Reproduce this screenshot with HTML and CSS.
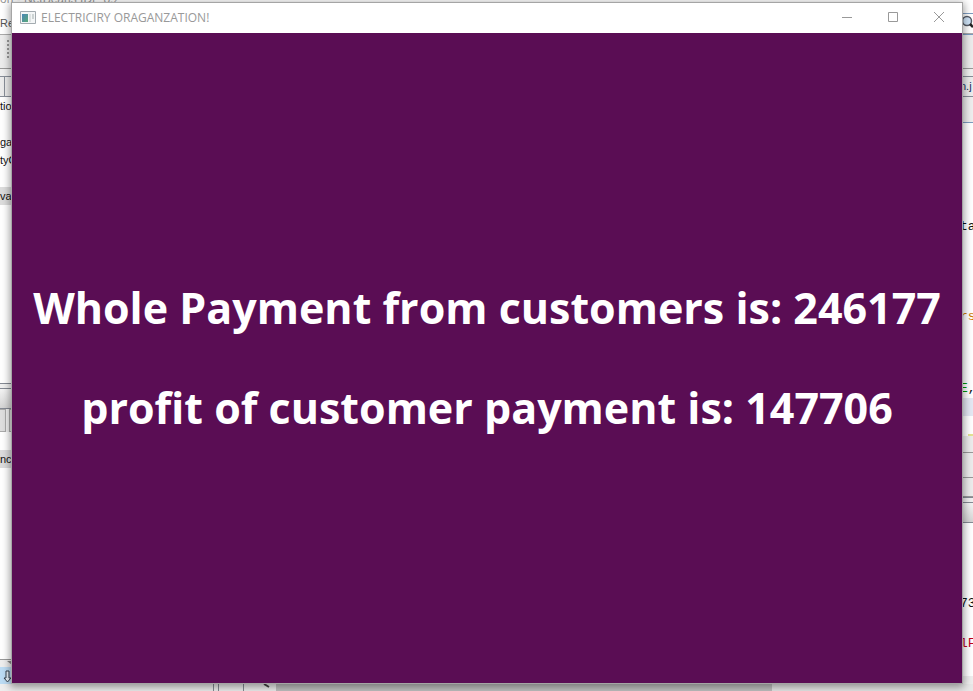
FILE: index.html
```html
<!DOCTYPE html>
<html lang="en">
<head>
<meta charset="utf-8">
<title>ELECTRICIRY ORAGANZATION!</title>
<link rel="stylesheet" href="styles.css">
</head>
<body>
<div class="desktop">
  <div class="ide">
    <div class="rail rail-left">
      <div class="caption">on - NetBeans IDE 8.2</div>
      <div class="menu">Ref</div>
      <div class="toolbar"><span class="grip"></span></div>
      <div class="gap"></div>
      <div class="tabs"><span class="tab-edge"></span></div>
      <div class="tree">
        <div class="node">tion</div>
        <div class="node"></div>
        <div class="node">ga</div>
        <div class="node">tyC</div>
        <div class="node"></div>
        <div class="node selected">va</div>
      </div>
      <div class="divider"></div>
      <div class="panel-head"></div>
      <div class="boxes"><span class="box"></span><span class="box"></span></div>
      <div class="nav">
        <div class="node selected">nci</div>
      </div>
      <div class="scroll-end">
        <svg width="12" height="7" viewBox="0 0 12 7"><path d="M7 1h5v4z" fill="#8a8a8a"/></svg>
      </div>
      <div class="tool">
        <svg width="12" height="18" viewBox="0 0 12 18"><path d="M6 4h3v7h2l-3.500 4L4 11h2z" fill="#e8f2fa" stroke="#34404c"/></svg>
      </div>
    </div>
    <div class="rail rail-right">
      <div class="search-space"></div>
      <div class="search">
        <svg width="13" height="18" viewBox="0 0 13 18"><circle cx="7" cy="7" r="4.500" fill="#cfe4f8" stroke="#555b66" stroke-width="1.500"/><path d="M10 10l3 3" stroke="#222" stroke-width="2.500"/></svg>
      </div>
      <div class="toolbar"></div>
      <div class="gap"></div>
      <div class="tabs">n.j</div>
      <div class="editor-bar"></div>
      <div class="editor">
        <div class="code line-a">ta</div>
        <div class="code line-b">rs</div>
        <div class="code line-c">E<span class="comma">,</span></div>
        <div class="current-line"></div>
        <div class="mark"></div>
      </div>
      <div class="bar bar-a"></div>
      <div class="bar bar-b"></div>
      <div class="bar bar-c"></div>
      <div class="divider"></div>
      <div class="panel-head"></div>
      <div class="output">
        <div class="code line-d">73</div>
        <div class="code line-e">lF</div>
      </div>
      <div class="foot"></div>
    </div>
  </div>
  <div class="status">
    <span class="status-left"></span>
    <span class="status-split"></span>
    <span class="status-cell"></span>
    <span class="status-arrow"><svg width="32" height="7" viewBox="0 0 32 7"><path d="M20 0l5 3" stroke="#444" stroke-width="2"/></svg></span>
    <span class="status-thumb"></span>
    <span class="status-track"></span>
  </div>

  <main class="window">
    <header class="titlebar">
      <svg class="app-icon" width="16" height="14" viewBox="0 0 16 14">
        <defs><linearGradient id="screen" x2="1" y2="1"><stop offset="0" stop-color="#4a86b8"/><stop offset="1" stop-color="#5aa878"/></linearGradient></defs>
        <path d="M.5.5h15v12H.5z" fill="#f4f6f7" stroke="#a3abb0"/>
        <path d="M2 3h6v8H2z" fill="url(#screen)"/>
        <path d="M9 3h2v8H9z" fill="#dde2e2"/>
        <path d="M12 3h2v5h-2z" fill="#ccd3d3"/>
      </svg>
      <h1 class="title">ELECTRICIRY ORAGANZATION!</h1>
      <button class="control" type="button" aria-label="Minimize"><svg width="12" height="12" viewBox="0 0 12 12"><path d="M1 5.500h10"/></svg></button>
      <button class="control" type="button" aria-label="Maximize"><svg width="12" height="12" viewBox="0 0 12 12"><path d="M1.500 .5h9v9h-9z"/></svg></button>
      <button class="control" type="button" aria-label="Close"><svg width="12" height="12" viewBox="0 0 12 12"><path d="M1 0l10 10M11 0L1 10"/></svg></button>
    </header>
    <section class="content">
      <p class="message">Whole Payment from customers is: 246177</p>
      <p class="message">profit of customer payment is: 147706</p>
    </section>
  </main>
</div>
</body>
</html>
```
FILE: styles.css
```css
* { box-sizing: border-box; }

body {
  margin: 0;
  font-family: "Open Sans", "Noto Sans", sans-serif;
}

svg { display: block; flex: none; }

.desktop {
  position: relative;
  display: flex;
  flex-direction: column;
  height: 100vh;
  overflow: hidden;
  background: #fff;
}

/* IDE behind the window */
.ide {
  flex: 1;
  display: flex;
  justify-content: space-between;
  min-height: 0;
}

.rail {
  display: flex;
  flex-direction: column;
  width: 13px;
  font-family: "Liberation Sans", sans-serif;
  font-size: 11px;
  line-height: 18px;
  white-space: nowrap;
  color: #111;
}

.rail > * { flex: none; overflow: hidden; }

.rail > .caption {
  display: flex;
  align-items: flex-end;
  height: 8px;
  overflow: visible;
  font-size: 12px;
  color: #999;
}

.menu { height: 27px; padding-top: 6px; border-bottom: 1px solid #aaa; color: #555; }
.toolbar { height: 34px; padding: 5px 0 0 7px; background: #ececec; border-bottom: 1px solid #999; }
.grip { display: block; width: 2px; height: 19px; background: repeating-linear-gradient(#999 0 2px, #ececec 2px 4px); }
.gap { height: 7px; background: #f0f0f0; }
.tabs { height: 21px; background: #ececec; border: solid #888e98; border-width: 1px 0; }
.tab-edge { display: block; width: 5px; height: 100%; border-right: 1px solid #888e98; }

.tree { height: 286px; }
.node { height: 18px; }
.selected { background: #dcdcdc; }

.divider { height: 6px; background: #f0f0f0; border: solid #858a94; border-width: 1px 0; }
.panel-head { height: 20px; background: linear-gradient(#f4f4f4, #d4d4d4); border-bottom: 1px solid #858a94; }
.boxes { display: flex; gap: 3px; height: 23px; background: #f0f0f0; }
.box { flex: none; width: 6px; background: #dedede; border: solid #aaa; border-width: 1px 1px 1px 0; }
.box + .box { border-left-width: 1px; }
.rail > .nav { flex: 1; padding-top: 18px; }
.scroll-end { height: 8px; background: #eee; border-top: 1px solid #999; }
.tool { height: 17px; background: #bcdcf4; }

.search-space { height: 13px; }
.search { height: 22px; background: #fff; border: solid #7c9cc0; border-width: 1px 0; box-shadow: inset 0 -1px #aaa; }
.rail-right .tabs { color: #17325c; }
.editor-bar { height: 26px; background: #eee; border-bottom: 1px solid #7c9cc0; }
.editor { height: 313px; }
.code { height: 18px; font-family: "Liberation Mono", monospace; font-size: 13px; }
.line-a { margin-top: 95px; }
.line-b { margin-top: 72px; color: #ce7b00; }
.line-c { margin-top: 54px; color: #009900; }
.comma { color: #111; }
.current-line { height: 18px; background: #e4e8f3; }
.mark { height: 3px; margin: 18px 0 0 8px; background: #e3e392; }
.bar { background: #ececec; border-bottom: 1px solid #999; }
.bar-a { height: 17px; }
.bar-b { height: 25px; }
.bar-c { height: 19px; }
.rail > .output { flex: 1; padding-top: 72px; }
.line-e { margin-top: 22px; color: #c00020; }
.foot { height: 8px; background: #eee; }

.status { display: flex; height: 7px; background: #eee; }
.status-left { width: 22%; border-right: 1px solid #858a94; }
.status-split { width: 5px; border-right: 1px solid #858a94; }
.status-cell { width: 25px; border-right: 1px solid #858a94; }
.status-arrow { width: 32px; }
.status-thumb { width: 51%; background: #c0c0c0; }
.status-track { flex: 1; background: #e8e8e8; }

/* Application window floating above the IDE */
.window {
  position: absolute;
  inset: 2px 10px 7px 11px;
  display: flex;
  flex-direction: column;
  border: 1px solid #a5a5a5;
  background: #5a0d54;
  box-shadow: 0 2px 8px 1px rgba(0, 0, 0, .4);
}

.titlebar {
  display: flex;
  align-items: center;
  height: 30px;
  padding-left: 8px;
  background: #fff;
}

.title {
  flex: 1;
  margin: 0 0 0 5px;
  font-size: 12px;
  font-weight: 400;
  line-height: 16px;
  color: #999;
}

.control {
  display: flex;
  align-items: center;
  justify-content: center;
  width: 46px;
  height: 30px;
  padding: 0;
  border: 0;
  background: none;
}

.control path { fill: none; stroke: #999; }

.content {
  flex: 1;
  display: flex;
  flex-direction: column;
  align-items: center;
  justify-content: center;
  gap: 40px;
}

.message {
  margin: 0;
  font-size: 43px;
  font-weight: 700;
  line-height: 60px;
  white-space: nowrap;
  color: #fff;
}
```
